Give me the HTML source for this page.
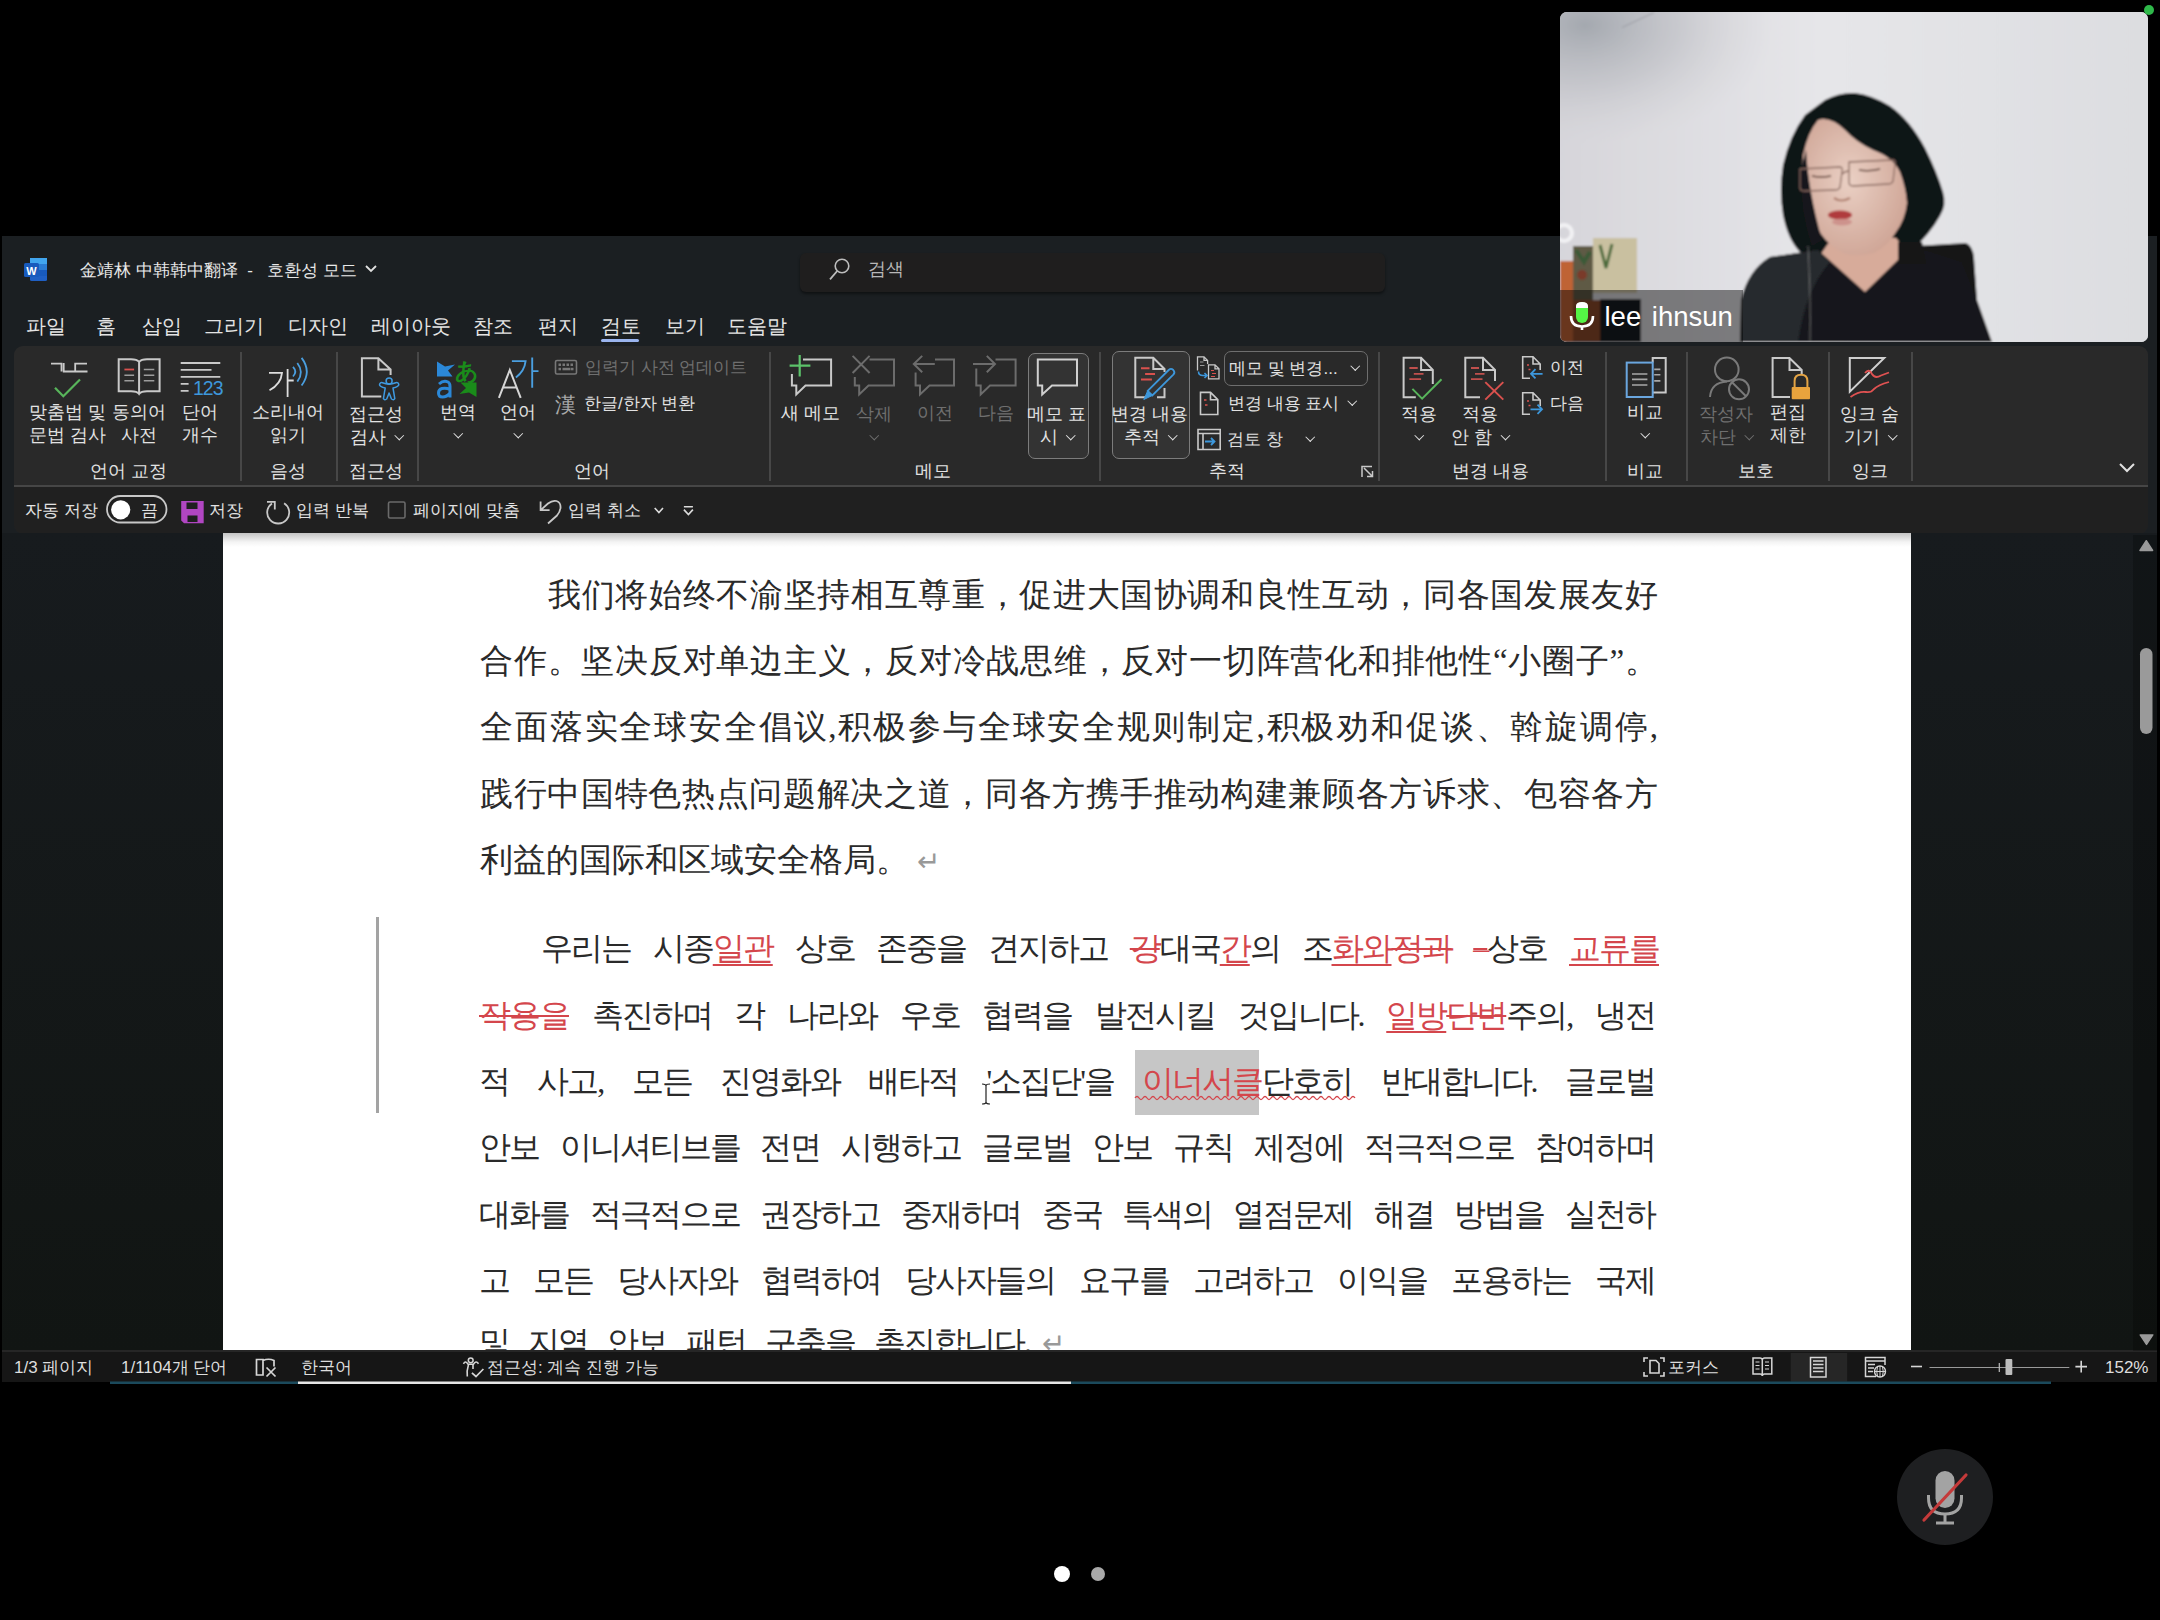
<!DOCTYPE html>
<html><head><meta charset="utf-8">
<style>
*{box-sizing:border-box;margin:0;padding:0}
html,body{width:2160px;height:1620px;overflow:hidden;background:#000;font-family:"Liberation Sans",sans-serif;color:#e6e6e6}
.a{position:absolute}
.c{position:absolute;white-space:nowrap;transform:translate(-50%,-50%);line-height:1}
.l{position:absolute;white-space:nowrap;transform:translateY(-50%);line-height:1}
#win{position:absolute;left:2px;top:236px;width:2155px;height:1146px;background:#1b1f22;overflow:hidden}
#ttl{font-size:17px;color:#e8e8e8}
.tab{font-size:20px;color:#e4e4e4}
#ribbon{position:absolute;left:12px;top:110px;width:2134px;height:188px;background:linear-gradient(#292929 0,#292929 139px,#202020 139px);border-radius:9px}
.rl{font-size:18px;color:#e2e2e2;text-align:center;line-height:23px}
.dis{color:#6f6f6f}
.sm{font-size:17px}
.cv{display:inline-block;width:6.5px;height:6.5px;border-right:1.7px solid currentColor;border-bottom:1.7px solid currentColor;transform:translateY(-5px) rotate(45deg);margin-left:5px}
.cv0{margin-left:0}
.sep{position:absolute;width:2px;background:#474747;top:352px;height:129px}
#doc{position:absolute;left:0;top:297px;width:2155px;height:819px;background:linear-gradient(#171b1e,#111513)}
#page{position:absolute;left:221px;top:0;width:1688px;height:819px;background:linear-gradient(#c4c4c4 0,#f4f4f4 9px,#fff 14px)}
.zh{position:absolute;left:257px;width:1178px;font-family:"Liberation Serif",serif;font-size:33px;color:#2a2a2a;white-space:nowrap;line-height:1;text-align:justify;text-align-last:justify}
.ko{position:absolute;left:256px;width:1176px;font-family:"Liberation Serif",serif;font-size:32px;letter-spacing:-2px;color:#2a2a2a;white-space:nowrap;line-height:1;display:flex;justify-content:space-between}
.rd{color:#d13438}
.ins{color:#d4464c;text-decoration:underline;text-decoration-thickness:1.5px;text-underline-offset:5px}
.del{color:#d4464c;text-decoration:line-through;text-decoration-thickness:1.5px}
#status{position:absolute;left:0;top:1114px;width:2155px;height:32px;background:#161616;border-top:2px solid #262626;font-size:17px;color:#dcdcdc}
</style></head><body>


<div id="win">
  <!-- title bar -->
  <div class="a" style="left:22px;top:22px;width:24px;height:24px"></div>
  <div class="l" id="ttl" style="left:78px;top:34px">金靖林 中韩韩中翻译 &nbsp;- &nbsp;&nbsp;호환성 모드</div>
  <div class="a" style="left:798px;top:17px;width:585px;height:39px;background:#1f1e1e;border-radius:6px;box-shadow:0 2px 3px rgba(0,0,0,0.45)"></div>
  <div class="l" style="left:866px;top:33px;font-size:18px;color:#b8b8b8">검색</div>

  <!-- tabs -->
  <div class="l tab" style="left:24px;top:90px">파일</div>
  <div class="l tab" style="left:94px;top:90px">홈</div>
  <div class="l tab" style="left:140px;top:90px">삽입</div>
  <div class="l tab" style="left:202px;top:90px">그리기</div>
  <div class="l tab" style="left:286px;top:90px">디자인</div>
  <div class="l tab" style="left:369px;top:90px">레이아웃</div>
  <div class="l tab" style="left:471px;top:90px">참조</div>
  <div class="l tab" style="left:536px;top:90px">편지</div>
  <div class="l tab" style="left:599px;top:90px">검토</div>
  <div class="l tab" style="left:663px;top:90px">보기</div>
  <div class="l tab" style="left:725px;top:90px">도움말</div>
  <div class="a" style="left:599px;top:103px;width:38px;height:3px;border-radius:2px;background:#9ab4ee"></div>

  <div id="ribbon">
  </div>

  <div id="doc">
    <div id="page">
      <div class="zh" style="top:46px;left:325px;width:1110px">我们将始终不渝坚持相互尊重，促进大国协调和良性互动，同各国发展友好</div>
      <div class="zh" style="top:112px">合作。坚决反对单边主义，反对冷战思维，反对一切阵营化和排他性“小圈子”。</div>
      <div class="zh" style="top:178px">全面落实全球安全倡议,积极参与全球安全规则制定,积极劝和促谈、斡旋调停,</div>
      <div class="zh" style="top:245px">践行中国特色热点问题解决之道，同各方携手推动构建兼顾各方诉求、包容各方</div>
      <div class="zh" style="top:311px;text-align-last:left">利益的国际和区域安全格局。<span style="color:#999;font-size:28px;margin-left:8px">↵</span></div>
      <div class="a" style="left:153px;top:384px;width:3px;height:196px;background:#a3a3a3"></div>
      <div class="a" style="left:912px;top:517px;width:124px;height:65px;background:#c6c6c6"></div>
      <svg class="a" style="left:756px;top:549px" width="14" height="24" fill="none"><path d="M3 2 Q7 2 7 4 Q7 2 11 2 M7 4 V20 M3 22 Q7 22 7 20 Q7 22 11 22" stroke="#222" stroke-width="1.2"/></svg>
      <svg class="a" style="left:0;top:0" width="1688" height="819" fill="none"><path d="M912 565 Q914.0 562.0 916.0 565 Q918.0 568.0 920.0 565 Q922.0 562.0 924.0 565 Q926.0 568.0 928.0 565 Q930.0 562.0 932.0 565 Q934.0 568.0 936.0 565 Q938.0 562.0 940.0 565 Q942.0 568.0 944.0 565 Q946.0 562.0 948.0 565 Q950.0 568.0 952.0 565 Q954.0 562.0 956.0 565 Q958.0 568.0 960.0 565 Q962.0 562.0 964.0 565 Q966.0 568.0 968.0 565 Q970.0 562.0 972.0 565 Q974.0 568.0 976.0 565 Q978.0 562.0 980.0 565 Q982.0 568.0 984.0 565 Q986.0 562.0 988.0 565 Q990.0 568.0 992.0 565 Q994.0 562.0 996.0 565 Q998.0 568.0 1000.0 565 Q1002.0 562.0 1004.0 565 Q1006.0 568.0 1008.0 565 Q1010.0 562.0 1012.0 565 Q1014.0 568.0 1016.0 565 Q1018.0 562.0 1020.0 565 Q1022.0 568.0 1024.0 565 Q1026.0 562.0 1028.0 565 Q1030.0 568.0 1032.0 565 Q1034.0 562.0 1036.0 565 Q1038.0 568.0 1040.0 565 Q1042.0 562.0 1044.0 565 Q1046.0 568.0 1048.0 565 Q1050.0 562.0 1052.0 565 Q1054.0 568.0 1056.0 565 Q1058.0 562.0 1060.0 565 Q1062.0 568.0 1064.0 565 Q1066.0 562.0 1068.0 565 Q1070.0 568.0 1072.0 565 Q1074.0 562.0 1076.0 565 Q1078.0 568.0 1080.0 565 Q1082.0 562.0 1084.0 565 Q1086.0 568.0 1088.0 565 Q1090.0 562.0 1092.0 565 Q1094.0 568.0 1096.0 565 Q1098.0 562.0 1100.0 565 Q1102.0 568.0 1104.0 565 Q1106.0 562.0 1108.0 565 Q1110.0 568.0 1112.0 565 Q1114.0 562.0 1116.0 565 Q1118.0 568.0 1120.0 565 Q1122.0 562.0 1124.0 565 Q1126.0 568.0 1128.0 565 Q1130.0 562.0 1132.0 565" stroke="#d4464c" stroke-width="1.3"/></svg>
      <div class="ko" style="top:399px;left:318px;width:1118px"><span>우리는</span><span>시종<span class="ins">일관</span></span><span>상호</span><span>존중을</span><span>견지하고</span><span><span class="del">강</span>대국<span class="ins">간</span>의</span><span>조<span class="ins">화와</span><span class="del">정과</span></span><span><span class="del">–</span>상호</span><span class="ins">교류를</span></div>
      <div class="ko" style="top:466px"><span class="del">작용을</span><span>촉진하며</span><span>각</span><span>나라와</span><span>우호</span><span>협력을</span><span>발전시킬</span><span>것입니다.</span><span><span class="ins">일방</span><span class="del">단변</span>주의,</span><span>냉전</span></div>
      <div class="ko" style="top:532px"><span>적</span><span>사고,</span><span>모든</span><span>진영화와</span><span>배타적</span><span>'소집단'을</span><span><span class="ins" style="text-decoration:none">이너서클</span>단호히</span><span>반대합니다.</span><span>글로벌</span></div>
      <div class="ko" style="top:598px"><span>안보</span><span>이니셔티브를</span><span>전면</span><span>시행하고</span><span>글로벌</span><span>안보</span><span>규칙</span><span>제정에</span><span>적극적으로</span><span>참여하며</span></div>
      <div class="ko" style="top:665px"><span>대화를</span><span>적극적으로</span><span>권장하고</span><span>중재하며</span><span>중국</span><span>특색의</span><span>열점문제</span><span>해결</span><span>방법을</span><span>실천하</span></div>
      <div class="ko" style="top:731px"><span>고</span><span>모든</span><span>당사자와</span><span>협력하여</span><span>당사자들의</span><span>요구를</span><span>고려하고</span><span>이익을</span><span>포용하는</span><span>국제</span></div>
      <div class="ko" style="top:793px;justify-content:flex-start;gap:19px"><span>및</span><span>지역</span><span>안보</span><span>패턴</span><span>구축을</span><span>촉진합니다.<span style="color:#999;font-size:28px;margin-left:12px">↵</span></span></div>
    </div>
  </div>

  <div id="status"></div>
</div>


<!-- ===== ribbon overlay (page coords) ===== -->
<div id="rb" class="a" style="left:0;top:0;width:2160px;height:1620px;pointer-events:none">
  <div class="a" style="left:14px;top:485px;width:2134px;height:2px;background:#464646"></div>
  <!-- separators -->
  <div class="sep" style="left:240px"></div><div class="sep" style="left:336px"></div><div class="sep" style="left:417px"></div>
  <div class="sep" style="left:769px"></div><div class="sep" style="left:1099px"></div><div class="sep" style="left:1378px"></div>
  <div class="sep" style="left:1605px"></div><div class="sep" style="left:1686px"></div><div class="sep" style="left:1828px"></div>
  <div class="sep" style="left:1911px"></div>
  <!-- toggled boxes -->
  <div class="a" style="left:1028px;top:353px;width:61px;height:106px;border:1.5px solid #7c7c7c;border-radius:7px;background:#333"></div>
  <div class="a" style="left:1112px;top:351px;width:78px;height:108px;border:1.5px solid #7c7c7c;border-radius:7px;background:#333"></div>
  <div class="a" style="left:1224px;top:351px;width:144px;height:35px;border:1.5px solid #6e6e6e;border-radius:7px"></div>
  <!-- large button labels -->
  <div class="c rl" style="left:68px;top:424px">맞춤법 및<br>문법 검사</div>
  <div class="c rl" style="left:139px;top:424px">동의어<br>사전</div>
  <div class="c rl" style="left:200px;top:424px">단어<br>개수</div>
  <div class="c rl" style="left:288px;top:424px">소리내어<br>읽기</div>
  <div class="c rl" style="left:376px;top:426px">접근성<br>검사 <span class="cv"></span></div>
  <div class="c rl" style="left:458px;top:424px">번역<br><span class="cv cv0"></span></div>
  <div class="c rl" style="left:518px;top:424px">언어<br><span class="cv cv0"></span></div>
  <div class="c rl" style="left:811px;top:413px">새 메모</div>
  <div class="c rl dis" style="left:874px;top:426px">삭제<br><span class="cv cv0"></span></div>
  <div class="c rl dis" style="left:935px;top:413px">이전</div>
  <div class="c rl dis" style="left:996px;top:413px">다음</div>
  <div class="c rl" style="left:1057px;top:426px">메모 표<br>시 <span class="cv"></span></div>
  <div class="c rl" style="left:1150px;top:426px">변경 내용<br>추적 <span class="cv"></span></div>
  <div class="c rl" style="left:1419px;top:426px">적용<br><span class="cv cv0"></span></div>
  <div class="c rl" style="left:1480px;top:426px">적용<br>안 함 <span class="cv"></span></div>
  <div class="c rl" style="left:1645px;top:424px">비교<br><span class="cv cv0"></span></div>
  <div class="c rl dis" style="left:1726px;top:426px">작성자<br>차단 <span class="cv"></span></div>
  <div class="c rl" style="left:1788px;top:424px">편집<br>제한</div>
  <div class="c rl" style="left:1870px;top:426px">잉크 숨<br>기기 <span class="cv"></span></div>
  <!-- small buttons -->
  <div class="l rl sm dis" style="left:585px;top:367px">입력기 사전 업데이트</div>
  <div class="l rl sm" style="left:584px;top:403px">한글/한자 변환</div>
  <div class="l rl sm" style="left:1229px;top:368px">메모 및 변경...</div>
  <div class="l rl sm" style="left:1352px;top:368px"><span class="cv cv0"></span></div>
  <div class="l rl sm" style="left:1228px;top:403px">변경 내용 표시 <span class="cv"></span></div>
  <div class="l rl sm" style="left:1227px;top:439px">검토 창 &nbsp;&nbsp;&nbsp;<span class="cv"></span></div>
  <div class="l rl sm" style="left:1550px;top:367px">이전</div>
  <div class="l rl sm" style="left:1550px;top:403px">다음</div>
  <!-- group labels -->
  <div class="c rl" style="left:129px;top:471px">언어 교정</div>
  <div class="c rl" style="left:288px;top:471px">음성</div>
  <div class="c rl" style="left:376px;top:471px">접근성</div>
  <div class="c rl" style="left:592px;top:471px">언어</div>
  <div class="c rl" style="left:933px;top:471px">메모</div>
  <div class="c rl" style="left:1227px;top:471px">추적</div>
  <div class="c rl" style="left:1491px;top:471px">변경 내용</div>
  <div class="c rl" style="left:1645px;top:471px">비교</div>
  <div class="c rl" style="left:1756px;top:471px">보호</div>
  <div class="c rl" style="left:1870px;top:471px">잉크</div>
  <!-- QAT -->
  <div class="l rl sm" style="left:25px;top:510px">자동 저장</div>
  <div class="l rl sm" style="left:296px;top:510px">입력 반복</div>
  <div class="l rl sm" style="left:209px;top:510px">저장</div>
  <div class="l rl sm" style="left:141px;top:510px">끔</div>
  <div class="l rl sm" style="left:413px;top:510px">페이지에 맞춤</div>
  <div class="l rl sm" style="left:568px;top:510px">입력 취소</div>
  <!-- status bar -->
  <div class="l" style="left:14px;top:1367px;font-size:17px;color:#dedede">1/3 페이지</div>
  <div class="l" style="left:121px;top:1367px;font-size:17px;color:#dedede">1/1104개 단어</div>
  <div class="l" style="left:301px;top:1367px;font-size:17px;color:#dedede">한국어</div>
  <div class="l" style="left:487px;top:1367px;font-size:17px;color:#dedede">접근성: 계속 진행 가능</div>
  <div class="l" style="left:1668px;top:1367px;font-size:17px;color:#dedede">포커스</div>
  <div class="l" style="left:2105px;top:1367px;font-size:17px;color:#dedede">152%</div>
</div>


<svg class="a" style="left:0;top:0" width="2160" height="1620" viewBox="0 0 2160 1620" fill="none" stroke-linecap="butt" stroke-linejoin="miter">
 <!-- Word logo -->
 <g>
  <rect x="30" y="258" width="17" height="23" rx="1.5" fill="#1f5fc4"/>
  <rect x="30" y="258" width="17" height="6" fill="#41a5ee"/>
  <rect x="30" y="264" width="17" height="6" fill="#2b7cd3"/>
  <rect x="30" y="270" width="17" height="6" fill="#185abd"/>
  <rect x="24" y="263" width="15" height="14" rx="1.5" fill="#185abd"/>
  <text x="31.5" y="274.5" font-size="11" font-weight="bold" fill="#fff" text-anchor="middle" font-family="Liberation Sans">W</text>
 </g>
 <!-- search icon -->
 <circle cx="842" cy="266" r="6.8" stroke="#bdbdbd" stroke-width="1.6"/>
 <line x1="837.2" y1="271" x2="830" y2="279.3" stroke="#bdbdbd" stroke-width="1.8"/>
 <!-- title chevron -->
 <path d="M366 266 L371 271 L376 266" stroke="#e0e0e0" stroke-width="1.8"/>

 <g stroke="#c9c9c9" stroke-width="2">
  <!-- 맞춤법 ㄱㄴㄷ -->
  <path d="M51 363.6 H61.5 V371.5 M63.7 363 V371.5 H75.2 M87 363.6 H75.2 V371.5 H87.5" stroke-width="1.8"/>
  <!-- book -->
  <path d="M118.7 359.2 H131 Q137 359.2 139.1 362 Q141.2 359.2 147 359.2 H159.6 V391.3 H147 Q141.2 391.3 139.1 394 Q137 391.3 131 391.3 H118.7 Z M139.1 362 V393"/>
  <path d="M124.4 375.3 H134.1 M124.4 380.8 H134.1 M143.8 369.5 H154.3 M143.8 375.3 H154.3 M143.8 380.8 H154.3" stroke="#9c9c9c" stroke-width="1.6"/>
  <path d="M124.4 369.5 H134.1" stroke="#d9514e" stroke-width="1.8"/>
  <!-- word count lines -->
  <path d="M180.7 363 H220.3 M180.7 369.8 H211.5 M180.7 376.8 H220.3 M180.7 383.9 H188.6 M180.7 390.9 H188.6" stroke-width="1.8"/>
  <!-- 가 speech -->
  <path d="M269 372.8 H282 Q281 384 269.5 390.2 M287.6 369 V397 M287.6 380.5 H293.7" stroke="#dedede" stroke-width="1.8"/>
  <!-- page accessibility -->
  <path d="M381.3 396.6 H361.9 V358.2 H378.4 L390.6 369.4 V375 M378.4 358.2 V369.4 H390.6"/>
  <!-- language A -->
  <path d="M498.9 397.8 L509.8 370 L520.7 397.8 M503 387.5 H516.6" stroke="#d6d6d6"/>
  <!-- keyboard -->
  <rect x="555.5" y="360.5" width="21" height="13.5" rx="1.5" stroke="#777" stroke-width="1.6"/>
  <!-- comment icons -->
  <path d="M803 359.6 H831.1 V385.6 H805.5 L796.3 394.4 V385.6 H791.9 V374" />
  <path d="M869.5 359.6 H894 V385.6 H868.5 L859.2 394.4 V385.6 H854.8 V377" stroke="#6c6c6c"/>
  <path d="M852.6 355.9 L869.6 373 M869.6 355.9 L852.6 373" stroke="#6c6c6c"/>
  <path d="M935 359.6 H954 V385.6 H929.5 L920 394.4 V385.6 H915.6 V372.5" stroke="#6c6c6c"/>
  <path d="M934.8 364 H913.3 M922.2 355.9 L913.8 364 L922.2 372.2" stroke="#6c6c6c"/>
  <path d="M995.5 359.6 H1015.6 V385.6 H990 L980.7 394.4 V385.6 H976.3 V368.5" stroke="#6c6c6c"/>
  <path d="M973 364 H995 M986.8 355.9 L995 364 L986.8 372.2" stroke="#6c6c6c"/>
  <path d="M1037.8 359.6 H1077 V385.6 H1052 L1042.2 394.4 V385.6 H1037.8 Z" stroke="#d0d0d0"/>
  <!-- track changes page -->
  <path d="M1146 397.2 H1135.3 V357.8 H1153.3 L1164.5 369 V372 M1153.3 357.8 V369 H1164.5 M1164.5 388 V397.2 H1157"/>
  <!-- small compare/pages -->
  <path d="M1197.5 370.4 V356.8 H1204 L1207.6 360.4 V364 M1204 356.8 V360.4 H1207.6" stroke-width="1.3"/>
  <path d="M1208.5 378.8 V364.8 H1215 L1219 368.8 V378.8 Z M1215 364.8 V368.8 H1219" stroke-width="1.3"/>
  <path d="M1200 362 H1203.5 M1200 365.5 H1204.5" stroke="#9a9a9a" stroke-width="1.1"/>
  <path d="M1200.5 414.5 V392.4 H1210.5 L1217.8 399.7 V414.5 Z M1210.5 392.4 V399.7 H1217.8" stroke-width="1.6"/>
  <path d="M1198 429.5 H1220.2 V449.5 H1198 Z M1198 433.5 H1220.2 M1203 433.5 V449.5" stroke-width="1.6"/>
  <!-- accept / reject pages -->
  <path d="M1415.8 397.2 H1403.6 V357.8 H1421.1 L1432.8 369.9 V384 M1421.1 357.8 V369.9 H1432.8"/>
  <path d="M1480 397.2 H1465.3 V357.8 H1483 L1495 369.9 V381 M1483 357.8 V369.9 H1495"/>
  <!-- prev/next pages -->
  <path d="M1530 378.2 H1522.7 V356.8 H1533 L1540.2 364 V370 M1533 356.8 V364 H1540.2" stroke-width="1.6"/>
  <path d="M1530 414.2 H1522.7 V392.8 H1533 L1540.2 400 V406 M1533 392.8 V400 H1540.2" stroke-width="1.6"/>
  <!-- compare -->
  <path d="M1652.7 362.6 V358 H1665.7 V392.4 H1652.7" />
  <path d="M1654.2 369.4 H1660.4 M1654.2 374.8 H1660.4 M1654.2 380.9 H1660.4 M1632 374 H1647.4 M1632 379.4 H1647.4 M1632 385 H1647.4" stroke="#a8a8a8" stroke-width="1.6"/>
  <rect x="1626.7" y="362.6" width="26" height="34.4" stroke="#6aa6de"/>
  <!-- block authors (disabled) -->
  <circle cx="1726.8" cy="369.4" r="11.8" stroke="#7a7a7a"/>
  <path d="M1710 397 Q1711 382.5 1727 381.5" stroke="#7a7a7a"/>
  <circle cx="1739" cy="389.3" r="10" stroke="#7a7a7a"/>
  <path d="M1732 382.3 L1746 396.3" stroke="#7a7a7a"/>
  <!-- restrict editing page -->
  <path d="M1790 397 H1772.6 V358 H1789.5 L1801.7 370 V374 M1789.5 358 V370 H1801.7"/>
  <!-- ink triangle -->
  <path d="M1849.8 391.6 V358 H1884.2 Z" stroke="#cfcfcf"/>
  <!-- ribbon collapse chevron -->
  <path d="M2120 464 L2127 471 L2134 464" stroke="#e0e0e0" stroke-width="2"/>
  <!-- dialog launcher -->
  <path d="M1362 477 V466.5 H1372 M1364 468 L1372.5 476.5 M1372.5 471 V476.5 H1367" stroke-width="1.5"/>
 </g>
 <!-- colored parts -->
 <path d="M55 387.8 L63.3 396.2 L80 379.5" stroke="#58b55b" stroke-width="2.2"/>
 <text x="193" y="395" font-size="19.5" fill="#3d97db" font-family="Liberation Sans" letter-spacing="-1">123</text>
 <path d="M293 366.9 Q297.5 371.7 293 376.5 M297.3 363 Q304.5 372.3 297.3 381.6 M301.6 357.9 Q312 371.7 301.6 385.5" stroke="#4a9fe0" stroke-width="1.8"/>
 <!-- accessibility figure -->
 <g stroke="#3f9ae0" stroke-width="1.5" stroke-linejoin="round">
  <circle cx="389.1" cy="381" r="3"/>
  <path d="M379.5 384.8 Q380 382 382.5 382.8 Q389 385.5 395.8 382.8 Q398.5 382 398.8 384.8 Q398.5 386.5 393 388 L394.8 398.6 Q393.5 400.5 391.5 399 L389.1 393 L386.7 399 Q384.7 400.5 383.4 398.6 L385.2 388 Q379.7 386.5 379.5 384.8 Z"/>
 </g>
 <!-- translate -->
 <path d="M437 361.5 L445 366.5 L455 364.5 L448 370.5 L452.5 376.5 H437 Z" fill="#2b88d8"/>
 <path d="M439 384 Q443.5 380 448 382 Q450 383 450 386.5 V397.5 M450 389.5 Q446 387.5 442 388.5 Q438.5 389.5 438.5 393 Q438.5 397 442.5 397 Q447 397 450 393" stroke="#2b88d8" stroke-width="3" fill="none"/>
 <text x="454.5" y="378.5" font-size="23" font-weight="bold" fill="#1a8c1a" font-family="Liberation Sans">あ</text>
 <path d="M476.5 397 L469 392.5 L459.5 394 L466 388 L460.5 382.5 H476.5 Z" fill="#1a8c1a"/>
 <!-- 가 blue -->
 <path d="M511.9 361.1 H525.6 Q524.5 371 515.9 377.4 M532.2 357.4 V387.8 M532.2 371.1 H538.5" stroke="#4a9fe0" stroke-width="1.9"/>
 <!-- keyboard keys -->
 <g fill="#777"><rect x="558.5" y="363.5" width="2.5" height="2.5"/><rect x="562.5" y="363.5" width="2.5" height="2.5"/><rect x="566.5" y="363.5" width="2.5" height="2.5"/><rect x="570.5" y="363.5" width="2.5" height="2.5"/><rect x="558.5" y="367.8" width="2.5" height="2.5"/><rect x="562.5" y="367.8" width="8" height="2.5"/><rect x="571" y="367.8" width="2.5" height="2.5"/></g>
 <text x="555" y="412" font-size="21" fill="#a8a8a8" font-family="Liberation Sans">漢</text>
 <!-- new comment plus -->
 <path d="M789.6 365.6 H810.4 M799.7 355 V376.4" stroke="#5cc26a" stroke-width="2.2"/>
 <!-- track changes red lines & pencil -->
 <path d="M1141 368.3 H1149.5 M1145.1 374.1 H1155 M1141 379.5 H1151.9" stroke="#d9514e" stroke-width="2"/>
 <path d="M1147.7 390.9 L1168.7 370 Q1171 367.8 1173.3 370 Q1175.5 372.3 1173.3 374.6 L1152.3 395.5 Z" stroke="#3d97db" stroke-width="1.8"/>
 <path d="M1147.7 390.9 L1152.3 395.5 L1143.8 399.5 Z" fill="#3d97db" stroke="#3d97db" stroke-width="1" stroke-linejoin="round"/>
 <!-- compare small icon marks -->
 <path d="M1198.5 371.5 Q1198.5 375.5 1203 375.5 H1206.5 M1204.5 373 L1207 375.5 L1204.5 378" stroke="#3d97db" stroke-width="1.6"/>
 <path d="M1211 370.5 H1214 M1212 373.5 H1216 M1211 376.5 H1215" stroke="#d9514e" stroke-width="1.2"/>
 <path d="M1204 400 H1206.5 M1205 405 H1207.5" stroke="#d9514e" stroke-width="1.6"/>
 <path d="M1205 441.5 H1214 M1211 438 L1214.5 441.5 L1211 445" stroke="#3d97db" stroke-width="1.8"/>
 <!-- accept/reject marks -->
 <path d="M1409.4 368 H1417.7 M1413.8 373.8 H1423.5 M1409.4 379.2 H1421.1" stroke="#c0504d" stroke-width="1.8"/>
 <path d="M1412.4 388.9 L1422.1 398.6 L1441.5 379.2" stroke="#58b55b" stroke-width="2"/>
 <path d="M1471 368 H1479 M1475 373.8 H1484.5 M1471 379.2 H1482.5" stroke="#c0504d" stroke-width="1.8"/>
 <path d="M1485.3 382.1 L1503.3 399.6 M1503.3 382.1 L1485.3 399.6" stroke="#d9514e" stroke-width="2"/>
 <path d="M1527 365 H1529 M1528.5 369.5 H1530.5 M1527 401 H1529 M1528.5 405.5 H1530.5" stroke="#d9514e" stroke-width="1.6"/>
 <path d="M1542.6 373.8 H1531 M1535.5 369.2 L1531 373.8 L1535.5 378.4" stroke="#3d97db" stroke-width="1.8"/>
 <path d="M1530.5 409.3 H1542 M1537.5 404.7 L1542 409.3 L1537.5 413.9" stroke="#3d97db" stroke-width="1.8"/>
 <!-- lock -->
 <path d="M1794.6 387 V381 Q1794.6 374.8 1801 374.8 Q1807.4 374.8 1807.4 381 V387" stroke="#e3a445" stroke-width="2"/>
 <rect x="1791.7" y="387" width="18.3" height="12.2" rx="1" fill="#e8a33d"/>
 <!-- ink squiggles -->
 <path d="M1865 373 Q1869 368 1872 374 Q1875 379 1881 375.5 L1889 372.5" stroke="#e05252" stroke-width="1.8"/>
 <path d="M1850.5 397 Q1859 391 1866 392 Q1871 393 1874 389 Q1878 385 1889 382" stroke="#e05252" stroke-width="1.8"/>

 <!-- QAT -->
 <rect x="107" y="496" width="59.5" height="26.5" rx="13.25" stroke="#c8c8c8" stroke-width="1.8"/>
 <circle cx="120.7" cy="509.8" r="9.6" fill="#fff"/>
 <path d="M181.2 501.1 H203.7 V523.3 H184 L181.2 520.5 Z" fill="#b146c2"/>
 <rect x="186.5" y="502.5" width="11" height="6.5" fill="#1f1f1f"/>
 <rect x="187.5" y="515.5" width="10" height="6.5" fill="#1f1f1f"/>
 <path d="M284.1 503.2 A11 11 0 1 1 272 503.4 M267 501.8 H274.8 V509.5" stroke="#c8c8c8" stroke-width="1.8"/>
 <rect x="388.5" y="502" width="16.5" height="16" rx="1.5" stroke="#6a6a6a" stroke-width="1.6"/>
 <path d="M540.6 501.6 V510.2 H549.6 M541.5 509.3 L548 503.5 Q552.5 500 556.5 501 Q561 502.5 560.5 508 Q560 512 557 515.5 L548 523.5" stroke="#c8c8c8" stroke-width="1.8"/>
 <path d="M654.7 508 L658.9 512.5 L663 508" stroke="#dcdcdc" stroke-width="1.6"/>
 <path d="M683.9 506.7 H692.9 M683.9 509.6 L688.4 514.6 L692.9 509.6" stroke="#dcdcdc" stroke-width="1.6"/>
</svg>

<!-- Zoom video thumbnail -->
<div class="a" id="video" style="left:1560px;top:12px;width:588px;height:330px;border-radius:7px;overflow:hidden;background:#e2e2e5">
<svg width="588" height="330" viewBox="1560 12 588 330" style="display:block">
 <defs>
  <linearGradient id="wall" x1="0" y1="0" x2="1" y2="0">
   <stop offset="0" stop-color="#d6d5da"/><stop offset="0.45" stop-color="#e6e6e9"/><stop offset="1" stop-color="#dcdde0"/>
  </linearGradient>
  <radialGradient id="corner" cx="0.5" cy="0.5" r="0.5">
   <stop offset="0" stop-color="#9ea3aa" stop-opacity="0.9"/><stop offset="0.5" stop-color="#b4b6bc" stop-opacity="0.5"/><stop offset="1" stop-color="#d0d0d4" stop-opacity="0"/>
  </radialGradient>
  <radialGradient id="skin" cx="0.45" cy="0.45" r="0.6">
   <stop offset="0" stop-color="#ead0c4"/><stop offset="1" stop-color="#cfa596"/>
  </radialGradient>
 </defs>
 <filter id="vb" x="-5%" y="-5%" width="110%" height="110%"><feGaussianBlur stdDeviation="1.3"/></filter>
 <g filter="url(#vb)">
 <rect x="1550" y="0" width="610" height="350" fill="url(#wall)"/>
 <ellipse cx="1585" cy="25" rx="190" ry="120" fill="url(#corner)"/>
 <path d="M1622 27.5 L1654 12.5" stroke="#9a9ca2" stroke-width="1" fill="none"/>
 <!-- shelf items -->
 <rect x="1560" y="261" width="13" height="81" fill="#bf6434"/>
 <circle cx="1564" cy="233" r="8" fill="none" stroke="#f2f2f4" stroke-width="4"/>
 <rect x="1573" y="246" width="20" height="54" fill="#5e5a45"/><path d="M1576 250 L1584 262 L1590 252" stroke="#3a5a38" stroke-width="4" fill="none"/><circle cx="1582" cy="275" r="5" fill="#7a3a2a"/>
 <rect x="1593" y="238" width="44" height="55" fill="#c9c0a0"/>
 <path d="M1600 245 L1606 268 L1612 244" stroke="#4c6a3a" stroke-width="3" fill="none"/>
 <rect x="1600" y="299" width="41" height="43" fill="#161b22"/>
 <rect x="1573" y="300" width="27" height="42" fill="#8a4a2a"/>
 <!-- chair back -->
 <path d="M1915 246 L1966 243 Q1973 246 1974 258 L1977 300 L1992 342 H1900 Z" fill="#121213"/>
 <!-- hair -->
 <path d="M1825 100 Q1840 92 1855 93 Q1872 95 1890 106 Q1910 120 1925 148 Q1937 172 1943 192 Q1947 205 1940 216 Q1930 234 1912 250 L1903 258 L1880 258 L1818 258 L1800 252 Q1788 240 1783 215 Q1779 190 1783 165 Q1790 135 1805 115 Z" fill="#111317"/>
 <!-- neck -->
 <path d="M1832 238 L1896 238 L1912 258 L1866 300 L1818 258 Z" fill="#d7ab9a"/>
 <!-- face -->
 <path d="M1818 120 Q1830 116 1845 130 Q1856 142 1873 150 Q1893 157 1900 172 Q1906 188 1907 203 Q1905 220 1896 232 Q1888 246 1874 253 Q1858 257 1845 254 Q1830 247 1821 234 Q1811 216 1805 196 Q1801 176 1803 155 Q1808 132 1818 120 Z" fill="url(#skin)"/>
 <!-- hair strands over left face -->
 <path d="M1806 150 Q1808 190 1822 240 L1812 246 Q1800 210 1801 170 Z" fill="#15171b"/>
 <!-- glasses -->
 <path d="M1800 169 L1840 167 Q1843 167 1842 172 L1840 187 Q1839 190 1835 190 L1804 191 Q1800 191 1800 187 Z" fill="none" stroke="#8a6a60" stroke-width="1.3"/>
 <path d="M1849 162 L1892 160 Q1896 160 1895 164 L1893 181 Q1892 184 1888 184 L1853 186 Q1849 186 1849 182 Z" fill="none" stroke="#8a6a60" stroke-width="1.3"/>
 <path d="M1842 174 Q1845 171 1849 171" stroke="#8a6a60" stroke-width="1.3" fill="none"/>
 <!-- eyes -->
 <path d="M1812 176 Q1821 178 1831 176 M1859 170 Q1869 172 1880 169" stroke="#5a3a30" stroke-width="1.6" fill="none"/>
 <!-- nose -->
 <path d="M1834 198 Q1841 203 1850 198" stroke="#b0806f" stroke-width="2.2" fill="none"/>
 <!-- lips -->
 <ellipse cx="1840" cy="215" rx="12" ry="4.5" fill="#b03a3c"/>
 <ellipse cx="1842" cy="222" rx="10" ry="3.5" fill="#c98a84" opacity="0.8"/>
 <!-- body -->
 <path d="M1740 342 L1741 300 Q1748 270 1770 257 L1818 250 L1865 292 L1906 252 L1925 250 L1962 262 Q1976 295 1990 342 Z" fill="#18191b"/>
 <path d="M1770 257 L1818 250 L1830 262 Q1805 290 1798 342 H1741 L1742 298 Q1750 270 1770 257 Z" fill="#26292d"/>
 <path d="M1898 242 L1922 242 L1926 264 L1898 264 Z" fill="#141416"/>
 <path d="M1808 246 Q1811 300 1810 342" stroke="#a0a0a0" stroke-width="1" fill="none" opacity="0.55"/>
 </g>
 <!-- name label -->
 <rect x="1560" y="290" width="183" height="52" fill="#000" opacity="0.45"/>
 <rect x="1576" y="302" width="12" height="21" rx="6" fill="#55f545"/>
 <path d="M1576 308 V306 Q1576 302 1582 302 Q1588 302 1588 306 V308 Z" fill="#fff"/>
 <path d="M1571 316 Q1571 326.5 1582 326.5 Q1593 326.5 1593 316" stroke="#fff" stroke-width="2.6" fill="none"/>
 <path d="M1582 326.5 V330" stroke="#fff" stroke-width="2.6"/>
 <text x="1604.5" y="325.7" font-size="27.5" fill="#fff" font-family="Liberation Sans" word-spacing="3">lee ihnsun</text>
</svg>
</div>
<div class="a" style="left:2144px;top:5px;width:10px;height:10px;border-radius:50%;background:#2fb84a"></div>

<svg class="a" style="left:0;top:0" width="2160" height="1620" viewBox="0 0 2160 1620" fill="none">
 <!-- scrollbar -->
 <rect x="2133" y="535" width="24" height="816" fill="#000" opacity="0.22"/>
 <path d="M2140 550.4 L2146.3 540.7 L2152.6 550.4 Z" fill="#9a9a9a" stroke="#9a9a9a" stroke-width="1.5" stroke-linejoin="round"/>
 <rect x="2140" y="648" width="12.5" height="86" rx="6.25" fill="#9a9a9a"/>
 <path d="M2140.2 1334.9 L2146.5 1344.4 L2152.8 1334.9 Z" fill="#9a9a9a" stroke="#9a9a9a" stroke-width="1.5" stroke-linejoin="round"/>
 <!-- status bar highlight -->
 <rect x="1790.7" y="1353" width="56.5" height="28.5" fill="#262626"/>
 <!-- progress line -->
 <rect x="110" y="1381.5" width="188" height="2.5" fill="#1b4a5c"/>
 <rect x="298" y="1381.5" width="773" height="2.5" fill="#e6e6e6"/>
 <rect x="1071" y="1381.5" width="980" height="2.5" fill="#1b4a5c"/>
 <g stroke="#d6d6d6" stroke-width="1.6">
  <!-- proofing icon -->
  <path d="M256.5 1359.5 H263 V1375 H256.5 Z M263 1360.5 Q268.5 1358 274 1360.5 V1366.5" stroke-width="1.7"/>
  <path d="M266.5 1367.5 L275.5 1376.5 M275.5 1367.5 L266.5 1376.5" stroke-width="1.7"/>
  <!-- accessibility icon -->
  <circle cx="470.7" cy="1360.3" r="2.4" stroke-width="1.5"/>
  <path d="M463.5 1363.8 Q465.5 1360 468 1364.2 H473.5 Q476 1360 478.5 1363.8 M468.5 1364.5 Q466.5 1371 467.3 1376.5 M473 1364.5 V1369" stroke-width="1.6"/>
  <path d="M471.9 1372.8 L476 1376.5 L483.4 1369" stroke-width="1.7"/>
  <!-- focus -->
  <path d="M1644 1362 V1358 H1648 M1660 1358 H1664 V1362 M1664 1372 V1376 H1660 M1648 1376 H1644 V1372"/>
  <path d="M1650 1373 V1360.5 H1656 L1659 1363.5 V1373 Z"/>
  <!-- read mode -->
  <path d="M1753 1358 H1760 Q1762 1358 1762.3 1360 Q1762.6 1358 1764.6 1358 H1771.8 V1374 H1764.6 Q1762.6 1374 1762.3 1376 Q1762 1374 1760 1374 H1753 Z M1762.3 1360 V1375" stroke-width="1.5"/>
  <path d="M1755.5 1362 H1759.5 M1755.5 1365.5 H1759.5 M1755.5 1369 H1759.5 M1765 1362 H1769 M1765 1365.5 H1769 M1765 1369 H1769" stroke-width="1.2"/>
  <!-- print layout -->
  <rect x="1810.5" y="1357.5" width="15.5" height="19.5" stroke-width="1.5"/>
  <path d="M1813 1361 H1823.5 M1813 1364.5 H1823.5 M1813 1368 H1823.5 M1813 1371.5 H1823.5" stroke-width="1.3"/>
  <!-- web layout -->
  <path d="M1876 1376.5 H1865.5 V1357.5 H1885 V1365" stroke-width="1.5"/>
  <path d="M1865.5 1361 H1885 M1868 1364.5 H1875 M1868 1368 H1874 M1868 1371.5 H1873" stroke-width="1.3"/>
  <circle cx="1880" cy="1371.5" r="5.5" stroke-width="1.4" fill="#161616"/>
  <path d="M1874.5 1371.5 H1885.5 M1880 1366 V1377 M1877.5 1367 Q1876 1371.5 1877.5 1376 M1882.5 1367 Q1884 1371.5 1882.5 1376" stroke-width="1"/>
  <!-- zoom -->
  <path d="M1911 1366.5 H1922" stroke-width="1.6"/>
  <path d="M1929.5 1367.5 H2069.3" stroke="#9a9a9a" stroke-width="1.2"/>
  <path d="M1999.3 1363 V1372" stroke="#bdbdbd" stroke-width="1.2"/>
  <path d="M2075.4 1366.6 H2087 M2081.2 1360.8 V1372.4" stroke-width="1.6"/>
 </g>
 <rect x="2005.5" y="1359" width="6.8" height="16" rx="1" fill="#bdbdbd"/>
</svg>
<!-- mic button -->
<svg class="a" style="left:1897px;top:1449px" width="96" height="96" viewBox="0 0 96 96">
 <circle cx="48" cy="48" r="48" fill="#1e1f21"/>
 <rect x="38.5" y="22" width="19" height="37" rx="9.5" fill="#a3a3a3"/>
 <path d="M31.5 46 V49 Q31.5 65 48 65 Q64.5 65 64.5 49 V46" stroke="#a3a3a3" stroke-width="3" fill="none"/>
 <path d="M48 65 V73 M39 74 H57" stroke="#a3a3a3" stroke-width="3"/>
 <path d="M27 71 L69 26" stroke="#c43a3a" stroke-width="3.2" stroke-linecap="round"/>
</svg>

<!-- bottom zoom controls -->
<div class="a" style="left:1054px;top:1566px;width:16px;height:16px;border-radius:50%;background:#fff"></div>
<div class="a" style="left:1091px;top:1567px;width:14px;height:14px;border-radius:50%;background:#a9a9a9"></div>
</body></html>
